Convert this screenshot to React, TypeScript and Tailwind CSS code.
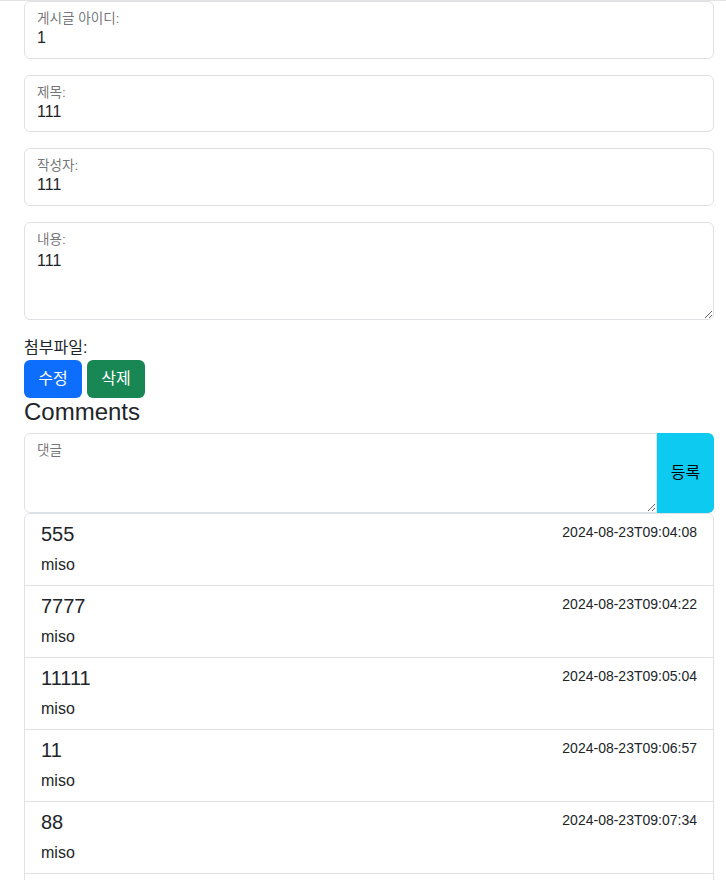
import type { ReactNode } from 'react'

const font = { fontFamily: '"Liberation Sans", "Noto Sans CJK KR", sans-serif' }

const comments = [
  { body: '555', writer: 'miso', date: '2024-08-23T09:04:08' },
  { body: '7777', writer: 'miso', date: '2024-08-23T09:04:22' },
  { body: '11111', writer: 'miso', date: '2024-08-23T09:05:04' },
  { body: '11', writer: 'miso', date: '2024-08-23T09:06:57' },
  { body: '88', writer: 'miso', date: '2024-08-23T09:07:34' },
  { body: '99', writer: 'miso', date: '2024-08-23T09:08:12' },
]

function FloatLabel({ children }: { children: ReactNode }) {
  return (
    <label className="pointer-events-none absolute left-[13px] top-[8px] text-[13.6px] leading-[20px] text-[rgba(33,37,41,0.65)]">
      {children}
    </label>
  )
}

function FloatInput({ label, value }: { label: string; value: string }) {
  return (
    <div className="relative mb-4">
      <input
        readOnly
        value={value}
        className="block h-[57.5px] w-full rounded-[6px] border border-[#dee2e6] bg-white px-3 pb-[9px] pt-[26px] text-base leading-6 text-[#212529] outline-none"
      />
      <FloatLabel>{label}</FloatLabel>
    </div>
  )
}

export default function App() {
  return (
    <div className="min-h-screen bg-white text-[#212529]" style={font}>
      <div className="h-px bg-[#e3e3e3]" />
      <div className="pl-6 pr-3">
        <FloatInput label="게시글 아이디:" value="1" />
        <FloatInput label="제목:" value="111" />
        <FloatInput label="작성자:" value="111" />

        <div className="relative mb-4">
          <textarea
            readOnly
            defaultValue="111"
            className="block h-[98px] w-full resize-y rounded-[6px] border border-[#dee2e6] bg-white px-3 pb-[10px] pt-[26px] text-base leading-6 text-[#212529] outline-none"
          />
          <FloatLabel>내용:</FloatLabel>
        </div>

        <div className="text-base leading-6">첨부파일:</div>
        <div className="flex gap-[5px]">
          <button className="h-[38px] w-[58px] rounded-[6px] bg-[#0d6efd] text-base text-white">수정</button>
          <button className="h-[38px] w-[58px] rounded-[6px] bg-[#198754] text-base text-white">삭제</button>
        </div>

        <h4 className="mb-[7px] text-[24px] font-normal leading-[28px]">Comments</h4>

        <div className="flex">
          <div className="relative min-w-0 flex-1">
            <textarea
              readOnly
              className="block h-[80px] w-full resize-y rounded-l-[6px] border border-[#dee2e6] bg-white px-3 pb-[10px] pt-[26px] text-base leading-6 outline-none"
            />
            <FloatLabel>댓글</FloatLabel>
          </div>
          <button className="w-[57px] shrink-0 rounded-r-[6px] bg-[#0dcaf0] text-base text-black">등록</button>
        </div>

        <ul className="overflow-hidden rounded-t-[6px] border border-[#dee2e6]">
          {comments.map((c, i) => (
            <li
              key={i}
              className={`flex justify-between px-4 pb-2 pt-2 ${i > 0 ? 'border-t border-[#dee2e6]' : ''}`}
            >
              <div>
                <h5 className="mb-[7px] text-[20px] font-normal leading-6">{c.body}</h5>
                <p className="text-base leading-6">{c.writer}</p>
              </div>
              <small className="text-[14px] leading-[21px]">{c.date}</small>
            </li>
          ))}
        </ul>
      </div>
    </div>
  )
}
